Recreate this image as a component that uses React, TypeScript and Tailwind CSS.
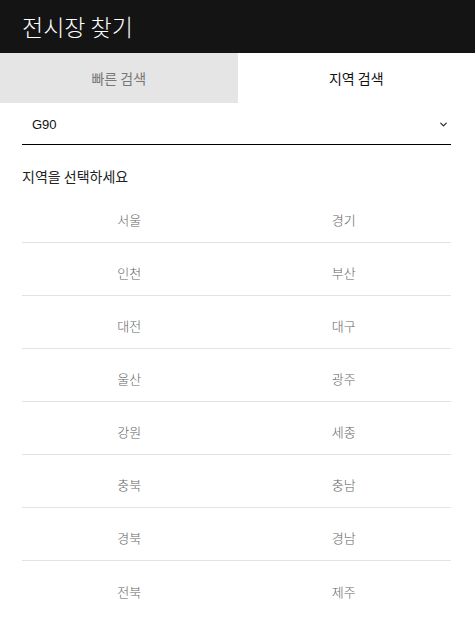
import { ChevronDown } from "lucide-react";

const regions: [string, string][] = [
  ["서울", "경기"],
  ["인천", "부산"],
  ["대전", "대구"],
  ["울산", "광주"],
  ["강원", "세종"],
  ["충북", "충남"],
  ["경북", "경남"],
  ["전북", "제주"],
];

const font = "font-['Noto_Sans_CJK_KR',sans-serif]";

export default function App() {
  return (
    <main className={`bg-white w-[475px] min-h-[623px] ${font}`}>
      {/* 헤더 */}
      <header className="h-[53px] bg-[#141414] px-[22px] flex items-center">
        <h1 className="text-white text-[23px] leading-none font-light">전시장 찾기</h1>
      </header>

      {/* 탭 */}
      <div className="grid grid-cols-2 h-[50px] text-[14px]">
        <button className="bg-[#e5e5e5] text-[#777]">빠른 검색</button>
        <button className="bg-white text-[#111]">지역 검색</button>
      </div>

      <section className="pl-[22px] pr-[24px]">
        <div className="h-[40px] mt-[2px] flex items-center justify-between border-b border-black pl-[10px] pr-[2px]">
          <span className="text-[13px] text-[#111] font-['Liberation_Sans',sans-serif]">G90</span>
          <ChevronDown size={11} strokeWidth={2.5} className="text-[#222]" />
        </div>

        <p className="mt-[24px] text-[14px] text-[#222] leading-none">지역을 선택하세요</p>

        <ul className="mt-[7px]">
          {regions.map(([a, b], i) => (
            <li
              key={a}
              className={`grid grid-cols-2 h-[53px] items-center pt-[8px] text-[13px] font-light text-[#666] ${
                i < regions.length - 1 ? "border-b border-[#e2e2e2]" : ""
              }`}
            >
              <span className="text-center">{a}</span>
              <span className="text-center">{b}</span>
            </li>
          ))}
        </ul>
      </section>
    </main>
  );
}
